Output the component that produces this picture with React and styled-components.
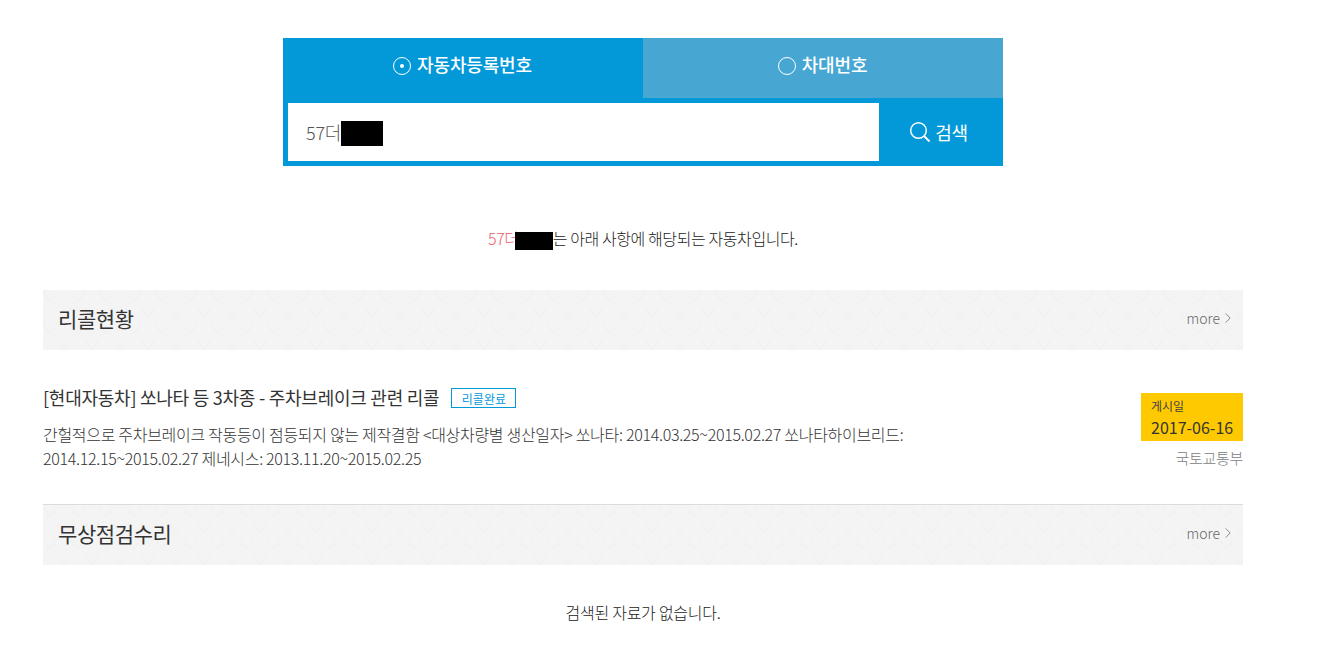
import React from 'react';
import styled, { createGlobalStyle } from 'styled-components';

const pattern = encodeURIComponent(
  '<svg xmlns="http://www.w3.org/2000/svg" width="28" height="32"><path d="M0 2l7 10 7-10M14 18l7 10 7-10" fill="none" stroke="#eeeeee" stroke-width="1"/></svg>'
);

const GlobalStyle = createGlobalStyle`
  html, body {
    margin: 0;
    padding: 0;
    background: #fff;
  }
  body {
    font-family: "Noto Sans CJK KR", "Noto Sans", sans-serif;
    color: #333;
  }
`;

const MoreLink = () => (
  <More>
    more
    <svg width="6" height="10" viewBox="0 0 6 10" fill="none" stroke="#8a8a8a">
      <path d="M.7.5L5.2 5 .7 9.5" />
    </svg>
  </More>
);

export default function App() {
  return (
    <>
      <GlobalStyle />
      <Page>
        <SearchBox>
          <Tabs>
            <Tab $active>
              <Radio $checked />
              자동차등록번호
            </Tab>
            <Tab>
              <Radio />
              차대번호
            </Tab>
          </Tabs>
          <SearchRow>
            <InputBox>
              57더<InputMask />
            </InputBox>
            <SearchButton>
              <svg width="22" height="22" viewBox="0 0 22 22" fill="none" stroke="#fff">
                <circle cx="9.5" cy="9.5" r="7.8" strokeWidth="1.5" />
                <path d="M15 15l5.5 5.5" strokeWidth="2" />
              </svg>
              검색
            </SearchButton>
          </SearchRow>
        </SearchBox>

        <ResultText>
          <Plate>57더</Plate>
          <ResultMask />는 아래 사항에 해당되는 자동차입니다.
        </ResultText>

        <Section>
          <SectionHeader>
            <SectionTitle>리콜현황</SectionTitle>
            <MoreLink />
          </SectionHeader>

          <RecallItem>
            <RecallBody>
              <RecallTitleRow>
                <RecallTitle>[현대자동차] 쏘나타 등 3차종 - 주차브레이크 관련 리콜</RecallTitle>
                <StatusTag>리콜완료</StatusTag>
              </RecallTitleRow>
              <RecallDesc>
                간헐적으로 주차브레이크 작동등이 점등되지 않는 제작결함 &lt;대상차량별 생산일자&gt; 쏘나타: 2014.03.25~2015.02.27 쏘나타하이브리드: 2014.12.15~2015.02.27 제네시스: 2013.11.20~2015.02.25
              </RecallDesc>
            </RecallBody>
            <RecallSide>
              <DateBadge>
                <DateLabel>게시일</DateLabel>
                <DateValue>2017-06-16</DateValue>
              </DateBadge>
              <Agency>국토교통부</Agency>
            </RecallSide>
          </RecallItem>
        </Section>

        <Section $divided>
          <SectionHeader>
            <SectionTitle>무상점검수리</SectionTitle>
            <MoreLink />
          </SectionHeader>
          <EmptyText>검색된 자료가 없습니다.</EmptyText>
        </Section>
      </Page>
    </>
  );
}

const Page = styled.div`
  width: 1200px;
  margin-left: 43px;
  padding-top: 38px;
`;
const SearchBox = styled.div`
  width: 720px;
  margin: 0 auto 0 240px;
  background: #0399d8;
`;
const Tabs = styled.div`
  display: flex;
  height: 60px;
`;
const Tab = styled.div`
  flex: 1;
  display: flex;
  align-items: center;
  justify-content: center;
  gap: 6px;
  padding: 0 1px 9px 0;
  box-sizing: border-box;
  background: ${(p) => (p.$active ? '#0399d8' : '#47a7d2')};
  color: #fff;
  font-size: 18px;
  font-weight: 500;
  letter-spacing: -0.15px;
`;
const Radio = styled.span`
  position: relative;
  top: 2px;
  width: 16px;
  height: 16px;
  border: 1px solid #fff;
  border-radius: 50%;
  display: flex;
  align-items: center;
  justify-content: center;
  &::after {
    content: '';
    display: ${(p) => (p.$checked ? 'block' : 'none')};
    width: 4px;
    height: 4px;
    border-radius: 50%;
    background: #fff;
  }
`;
const SearchRow = styled.div`
  display: flex;
  height: 58px;
  padding: 5px;
`;
const InputBox = styled.div`
  width: 591px;
  height: 58px;
  background: #fff;
  padding-left: 18px;
  box-sizing: border-box;
  display: flex;
  align-items: center;
  font-size: 18px;
  font-weight: 300;
  color: #555;
  letter-spacing: -0.2px;
`;
const InputMask = styled.span`
  width: 42px;
  height: 25px;
  margin-top: 2px;
  background: #000;
`;
const SearchButton = styled.div`
  flex: 1;
  display: flex;
  align-items: center;
  justify-content: center;
  gap: 4px;
  color: #fff;
  font-size: 18px;
  font-weight: 400;
  letter-spacing: -0.4px;
`;
const ResultText = styled.div`
  margin-top: 60px;
  height: 24px;
  line-height: 24px;
  text-align: center;
  font-size: 16px;
  font-weight: 300;
  color: #222;
  letter-spacing: -0.4px;
`;
const Plate = styled.span`
  color: #ee5c68;
`;
const ResultMask = styled.span`
  display: inline-block;
  width: 38px;
  height: 18px;
  margin-left: -4px;
  background: #000;
  vertical-align: middle;
`;
const Section = styled.section`
  margin-top: ${(p) => (p.$divided ? '0' : '40px')};
  border-top: ${(p) => (p.$divided ? '1px solid #dcdcdc' : 'none')};
`;
const SectionHeader = styled.div`
  height: 60px;
  box-sizing: border-box;
  display: flex;
  align-items: center;
  justify-content: space-between;
  padding: 0 12px 5px 15px;
  background-color: #f4f4f4;
  background-image: url("data:image/svg+xml,${pattern}");
`;
const SectionTitle = styled.h2`
  margin: 0;
  font-size: 21px;
  font-weight: 400;
  color: #333;
  letter-spacing: -0.4px;
`;
const More = styled.div`
  display: flex;
  align-items: center;
  gap: 5px;
  font-size: 14px;
  font-weight: 300;
  color: #666;
`;
const RecallItem = styled.div`
  display: flex;
  justify-content: space-between;
  padding: 34px 0 34px;
`;
const RecallBody = styled.div`
  width: 900px;
`;
const RecallTitleRow = styled.div`
  display: flex;
  align-items: center;
  gap: 12px;
  height: 28px;
`;
const RecallTitle = styled.h3`
  margin: 0;
  padding-bottom: 2px;
  font-size: 18px;
  font-weight: 400;
  color: #333;
  letter-spacing: -0.25px;
`;
const StatusTag = styled.span`
  width: 65px;
  height: 20px;
  box-sizing: border-box;
  border: 1px solid #0399d8;
  display: flex;
  align-items: center;
  justify-content: center;
  font-size: 12px;
  font-weight: 400;
  color: #0399d8;
`;
const RecallDesc = styled.p`
  margin: 10px 0 0;
  font-size: 16px;
  font-weight: 300;
  line-height: 24px;
  color: #333;
  letter-spacing: -0.3px;
`;
const RecallSide = styled.div`
  width: 102px;
  padding-top: 9px;
  display: flex;
  flex-direction: column;
  align-items: flex-end;
`;
const DateBadge = styled.div`
  width: 102px;
  height: 48px;
  box-sizing: border-box;
  background: #fec900;
  padding: 4px 0 0 10px;
`;
const DateLabel = styled.div`
  font-size: 12px;
  line-height: 18px;
  font-weight: 400;
  color: #444;
`;
const DateValue = styled.div`
  margin-top: 1px;
  font-size: 16px;
  line-height: 22px;
  font-weight: 400;
  color: #333;
`;
const Agency = styled.div`
  margin-top: 6px;
  font-size: 15px;
  font-weight: 300;
  color: #808080;
  letter-spacing: -0.3px;
`;
const EmptyText = styled.div`
  margin-top: 35px;
  text-align: center;
  font-size: 16px;
  font-weight: 300;
  line-height: 24px;
  color: #222;
  letter-spacing: -0.25px;
`;
